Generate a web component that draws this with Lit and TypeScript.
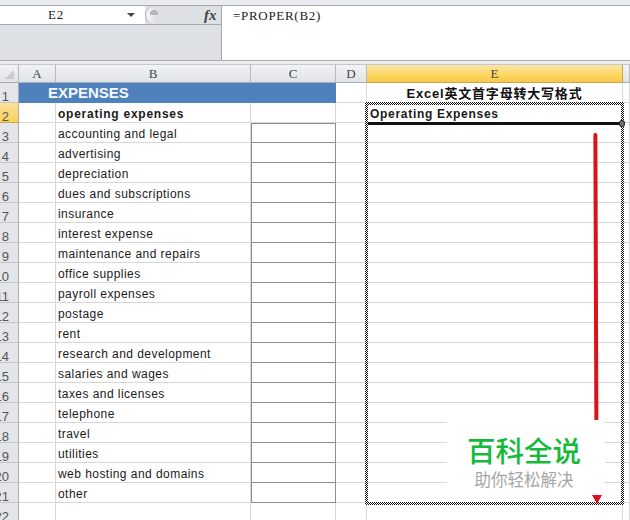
import { LitElement, html, css } from "lit";
import { customElement } from "lit/decorators.js";

const ITEMS = [
  "accounting and legal", "advertising", "depreciation", "dues and subscriptions", "insurance",
  "interest expense", "maintenance and repairs", "office supplies", "payroll expenses", "postage",
  "rent", "research and development", "salaries and wages", "taxes and licenses", "telephone",
  "travel", "utilities", "web hosting and domains", "other",
];

@customElement("app-root")
export class AppRoot extends LitElement {
  static styles = css`
    :host { display: block; width: 630px; height: 520px; overflow: hidden; position: relative; background: #fff; font-family: "Liberation Sans", sans-serif; }
    .top { height: 61px; display: flex; flex-direction: column; background: #dde0e4; border-bottom: 1px solid #a9abae; box-sizing: border-box; }
    .strip { height: 6px; background: #e9ebee; border-bottom: 1px solid #a5a8ab; box-sizing: border-box; }
    .bar { flex: 1; display: flex; }
    .left { width: 222px; box-sizing: border-box; display: flex; flex-direction: column; border-right: 1px solid #a5a8ab; }
    .namerow { height: 19px; box-sizing: border-box; display: flex; align-items: center; border-bottom: 1px solid #a5a8ab; }
    .white { width: 145px; height: 100%; flex: none; display: flex; align-items: center; background: #fff; }
    .namebox { width: 127px; padding-right: 15px; box-sizing: border-box; text-align: center; font: 13px "Liberation Serif", serif; letter-spacing: 0.8px; color: #222; }
    .dd { width: 0; height: 0; border-left: 4px solid transparent; border-right: 4px solid transparent; border-top: 4px solid #444; }
    .pill { position: relative; width: 15px; height: 18px; flex: none; border-left: 1px solid #a8abae; border-radius: 10px 0 0 10px; box-sizing: border-box; background: linear-gradient(90deg, #f6f7f8, #dde0e4 70%); }
    .pill::after { content: ""; position: absolute; left: 4px; top: 4px; width: 8px; height: 5px; border-radius: 5px 5px 0 0; background: #b4b7ba; }
    .fx { margin-left: 44px; font: italic bold 15px "Liberation Serif", serif; color: #444; }
    .formula { flex: 1; background: #fff; padding: 1px 0 0 11px; font: 13px/17px "Liberation Serif", serif; letter-spacing: 0.7px; color: #222; }
    .gap { height: 4px; background: #ebecee; border-bottom: 1px solid #c6c8cb; box-sizing: border-box; }
    .grid { display: grid; grid-template-columns: 19px 37px 195px 85px 31px 256px 7px; grid-template-rows: 18px; grid-auto-rows: 20px; }
    .grid > div { box-sizing: border-box; border-right: 1px solid #d8d8d8; border-bottom: 1px solid #d8d8d8; white-space: nowrap; overflow: hidden; }
    .grid > .ch { background: linear-gradient(#f1f3f5, #e0e3e7); border-bottom: 1px solid #a9adb2; border-right: 1px solid #b5b8bc; text-align: center; font: 13px/18px "Liberation Serif", serif; color: #444; }
    .grid > .corner { position: relative; }
    .corner::after { content: ""; position: absolute; right: 4px; bottom: 3px; border-left: 9px solid transparent; border-bottom: 9px solid #c8cbcf; }
    .grid > .ch.sel { background: linear-gradient(#fbe6a8, #fdd65f 60%, #f7c94d); border-right-color: #c8a94a; border-bottom-color: #c8a94a; }
    .grid > .rh { background: #e3e5e9; border-right: 1px solid #a9adb2; border-bottom: 1px solid #c3c6ca; font: 13px/28px "Liberation Sans", sans-serif; color: #555; padding-right: 9px; display: flex; justify-content: flex-end; }
    .grid > .rh.sel { background: linear-gradient(#fbe29a, #fbd05c); border-bottom-color: #c8a94a; }
    .txt { padding-left: 2px; font-size: 12px; line-height: 22px; letter-spacing: 0.45px; color: #1a1a1a; }
    .b { font-weight: bold; letter-spacing: 0.75px; }
    .grid > .band { grid-column: span 3; background: #4f81bd; color: #f4f8fc; font-weight: bold; font-size: 15px; line-height: 19px; padding-left: 29px; border-color: #4f81bd; }
    .title { text-align: center; font-weight: bold; font-size: 13px; line-height: 21px; letter-spacing: 0.8px; color: #111; font-family: "Liberation Sans", "Noto Sans CJK SC", sans-serif; }
    .grid > .boxed { border: 1px solid #8e8e8e; border-top: 0; }
    .grid > .c3 { border-top: 1px solid #8e8e8e; }
    .e2 { padding-left: 3px; letter-spacing: 0.7px; }
    .ants { position: absolute; background: repeating-conic-gradient(#111 0 25%, #fff 0 50%) 0 0 / 2px 2px; pointer-events: none; }
    .a-t { left: 365px; top: 102px; width: 259px; height: 3px; }
    .a-b { left: 365px; top: 502px; width: 259px; height: 3px; }
    .a-l { left: 365px; top: 102px; width: 3px; height: 403px; }
    .a-r { left: 621px; top: 102px; width: 3px; height: 403px; }
    .line { position: absolute; left: 367px; top: 122px; width: 255px; height: 3px; background: #111; }
    .handle { position: absolute; left: 619px; top: 120px; width: 6px; height: 7px; border-radius: 50%; background: #777; border: 1px solid #222; box-sizing: border-box; }
    .arrow { position: absolute; left: 594px; top: 133px; width: 4px; height: 362px; background: #d9131b; border-radius: 2px 2px 0 0; transform: rotate(-0.2deg); }
    .head { position: absolute; left: 592px; top: 495px; border-left: 5px solid transparent; border-right: 5px solid transparent; border-top: 9px solid #d9131b; }
    .wm { position: absolute; left: 447px; top: 420px; width: 158px; height: 77px; padding-right: 4px; box-sizing: border-box; background: #fff; display: flex; flex-direction: column; align-items: center; font-family: "Noto Sans CJK SC", sans-serif; }
    .wm1 { margin-top: 11px; font-size: 28.5px; line-height: 37px; font-weight: 500; color: #14bb3a; }
    .wm2 { font-size: 16.5px; line-height: 22px; color: #a5a5a5; }
  `;

  render() {
    const cols = ["A", "B", "C", "D", "E", ""];
    return html`
      <div class="top">
        <div class="strip"></div>
        <div class="bar">
          <div class="left">
            <div class="namerow">
              <div class="white">
                <div class="namebox">E2</div>
                <div class="dd"></div>
              </div>
              <div class="pill"></div>
              <div class="fx">fx</div>
            </div>
          </div>
          <div class="formula">=PROPER(B2)</div>
        </div>
      </div>
      <div class="gap"></div>
      <div class="grid">
        <div class="ch corner"></div>
        ${cols.map((c) => html`<div class="ch ${c === "E" ? "sel" : ""}">${c}</div>`)}

        <div class="rh">1</div>
        <div class="band">EXPENSES</div>
        <div></div>
        <div class="title">Excel英文首字母转大写格式</div>
        <div></div>

        <div class="rh sel">2</div>
        <div></div>
        <div class="txt b">operating expenses</div>
        <div></div>
        <div></div>
        <div class="txt b e2">Operating Expenses</div>
        <div></div>

        ${ITEMS.map((t, i) => html`
          <div class="rh">${i + 3}</div>
          <div></div>
          <div class="txt">${t}</div>
          <div class="boxed ${i === 0 ? "c3" : ""}"></div>
          <div></div>
          <div></div>
          <div></div>
        `)}

        <div class="rh">22</div>
        <div></div><div></div><div></div><div></div><div></div><div></div>
      </div>
      <div class="line"></div>
      <div class="arrow"></div>
      <div class="wm"><div class="wm1">百科全说</div><div class="wm2">助你轻松解决</div></div>
      <div class="ants a-t"></div>
      <div class="ants a-b"></div>
      <div class="ants a-l"></div>
      <div class="ants a-r"></div>
      <div class="handle"></div>
      <div class="head"></div>
    `;
  }
}
